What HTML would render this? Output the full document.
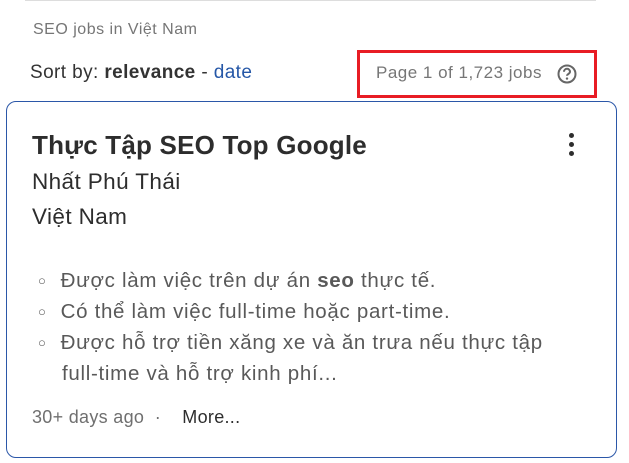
<!DOCTYPE html>
<html><head><meta charset="utf-8"><style>
body{margin:0;width:629px;height:463px;background:#fff;font-family:"Liberation Sans",sans-serif;position:relative;overflow:hidden}
.a{position:absolute;white-space:nowrap}
</style></head><body>
<div class="a" style="left:25px;top:0;width:571px;height:1px;background:#ddd"></div>
<div class="a" style="left:33px;top:21px;font-size:16px;color:#767676;letter-spacing:0.5px">SEO jobs in Việt Nam</div>
<div class="a" style="left:30px;top:62px;font-size:19px;color:#333;letter-spacing:0.4px">Sort by: <b>relevance</b> - <span style="color:#2557a7">date</span></div>
<div class="a" style="left:357px;top:50px;width:234px;height:42px;border:3px solid #e81c24"></div>
<div class="a" style="left:376px;top:63px;font-size:17px;color:#767676;letter-spacing:0.5px">Page 1 of 1,723 jobs</div>
<svg class="a" style="left:556px;top:63px" width="22" height="22" viewBox="0 0 22 22"><circle cx="11" cy="11" r="8.5" fill="none" stroke="#666" stroke-width="2"/><path d="M8 8.8a3 3 0 0 1 6 0c0 2-3 2.2-3 4" fill="none" stroke="#666" stroke-width="2"/><circle cx="11" cy="15.6" r="1.2" fill="#666"/></svg>
<div class="a" style="left:6px;top:101px;width:609px;height:355px;border:1px solid #2b57a8;border-radius:10px"></div>
<div class="a" style="left:32px;top:130px;font-size:26px;font-weight:bold;color:#2d2d2d;letter-spacing:0.2px">Thực Tập SEO Top Google</div>
<div class="a" style="left:569px;top:133px"><div style="width:5px;height:5px;border-radius:50%;background:#2d2d2d;margin-bottom:4px"></div><div style="width:5px;height:5px;border-radius:50%;background:#2d2d2d;margin-bottom:4px"></div><div style="width:5px;height:5px;border-radius:50%;background:#2d2d2d"></div></div>
<div class="a" style="left:32px;top:169px;font-size:22.5px;color:#2d2d2d;letter-spacing:0.4px">Nhất Phú Thái</div>
<div class="a" style="left:32px;top:204px;font-size:22.5px;color:#2d2d2d;letter-spacing:0.4px">Việt Nam</div>
<div class="a" style="left:38px;top:265px;font-size:20.5px;color:#595959;line-height:31px;letter-spacing:0.7px">
<div><span style="font-size:13px;vertical-align:2px;margin-right:14px">○</span>Được làm việc trên dự án <b>seo</b> thực tế.</div>
<div><span style="font-size:13px;vertical-align:2px;margin-right:14px">○</span>Có thể làm việc full-time hoặc part-time.</div>
<div><span style="font-size:13px;vertical-align:2px;margin-right:14px">○</span>Được hỗ trợ tiền xăng xe và ăn trưa nếu thực tập</div>
<div style="padding-left:24px">full-time và hỗ trợ kinh phí...</div>
</div>
<div class="a" style="left:32px;top:407px;font-size:18px;color:#6f6f6f;letter-spacing:0.3px">30+ days ago&nbsp;&nbsp;·&nbsp;&nbsp;&nbsp;&nbsp;<span style="color:#2d2d2d">More...</span></div>
</body></html>
